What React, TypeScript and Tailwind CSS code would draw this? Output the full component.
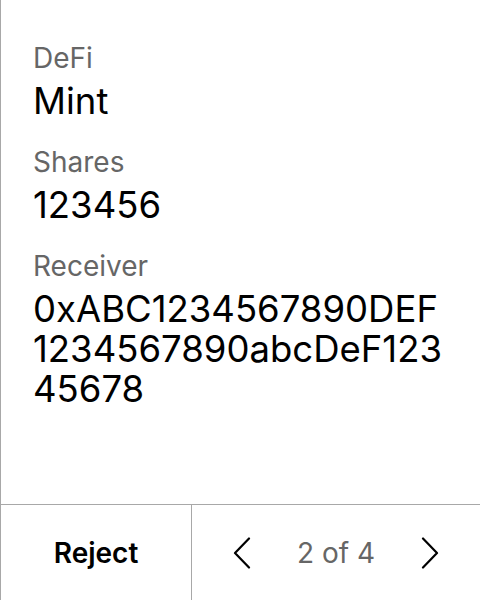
import React from "react";

type Field = { label: string; value: string };

const fields: Field[] = [
	{ label: "DeFi", value: "Mint" },
	{ label: "Shares", value: "123456" },
	{ label: "Receiver", value: "0xABC1234567890DEF1234567890abcDeF12345678" },
];

const Chevron: React.FC<{ dir: "left" | "right" }> = ({ dir }) => (
	<svg width="18" height="32" viewBox="0 0 18 32" fill="none" stroke="#000" strokeWidth="2.2" strokeLinecap="round" strokeLinejoin="round">
		{dir === "left" ? <path d="M16 1.5 2 16l14 14.5" /> : <path d="M2 1.5 16 16 2 30.5" />}
	</svg>
);

const App: React.FC = () => {
	return (
		<div className="w-[480px] h-[600px] bg-white border-l border-[#a8a8a8] flex flex-col text-black" style={{ fontFamily: "Inter, 'Noto Sans', sans-serif" }}>
			{/* Transaction details */}
			<div className="flex-1 px-8 pt-[42px]">
				{fields.map((f) => (
					<div key={f.label} className="mb-[25px]">
						<div className="text-[28px] leading-8 text-[#666]">{f.label}</div>
						<div className="mt-[7px] text-[36.5px] leading-10 break-all">{f.value}</div>
					</div>
				))}
			</div>

			{/* Footer actions */}
			<div className="h-[96px] border-t border-[#a8a8a8] flex">
				<button className="w-[191px] border-r border-[#a8a8a8] text-[28px] font-semibold">Reject</button>
				<div className="flex-1 flex items-center justify-center gap-[46px]">
					<Chevron dir="left" />
					<span className="text-[28px] text-[#666]">2 of 4</span>
					<Chevron dir="right" />
				</div>
			</div>
		</div>
	);
};

export default App;
